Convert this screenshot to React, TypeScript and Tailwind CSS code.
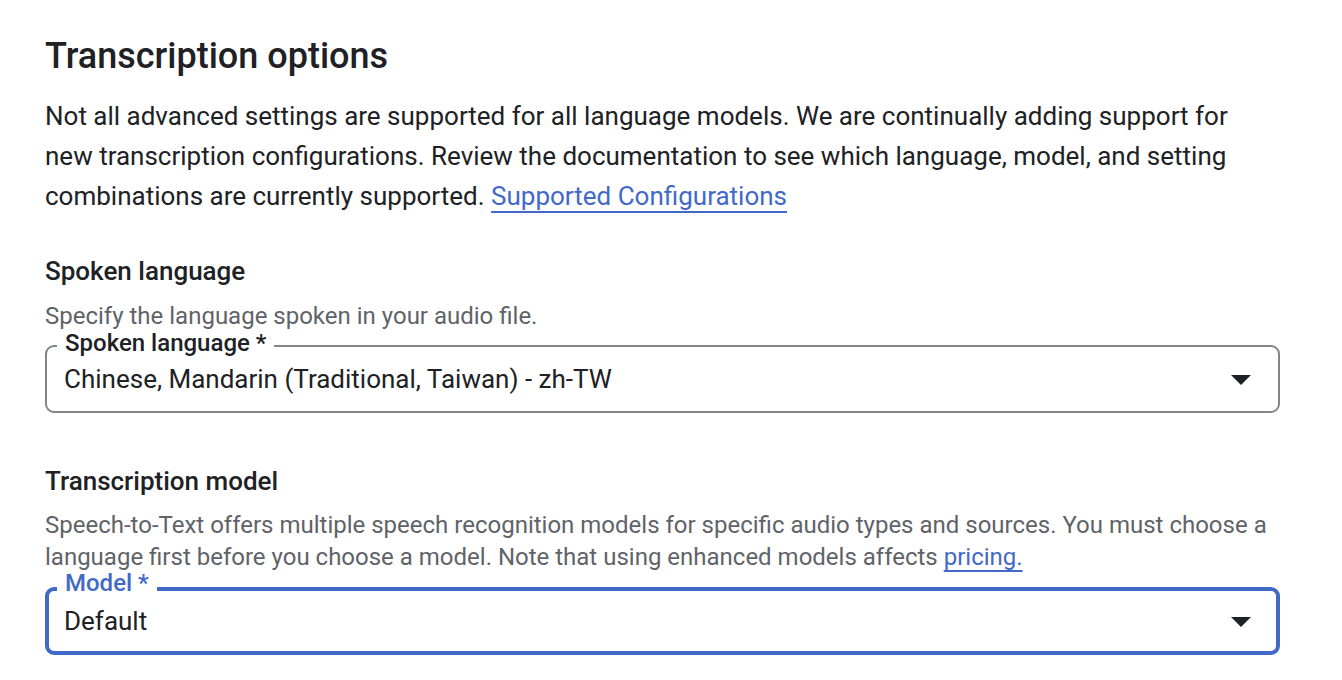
const FONT = { fontFamily: "Roboto, 'Noto Sans', Arial, sans-serif" };

function DropArrow() {
  return (
    <svg width="48" height="48" viewBox="0 0 24 24" className="shrink-0">
      <path d="M7 10l5 5 5-5z" fill="#202124" />
    </svg>
  );
}

function SelectField({ label, value, focused = false }: { label: string; value: string; focused?: boolean }) {
  return (
    <div
      className={
        focused
          ? "relative flex h-[68px] items-center justify-between rounded-[9px] border-[4px] border-[#4169c8] pl-[15px] pr-[11px]"
          : "relative flex h-[68px] items-center justify-between rounded-[9px] border-2 border-[#80868b] pl-[17px] pr-[13px]"
      }
    >
      <span
        className={
          focused
            ? "absolute left-[8px] top-[-20px] bg-white px-[8px] text-[24px] leading-[24px] font-medium text-[#4169c8]"
            : "absolute left-[10px] top-[-16px] bg-white px-[8px] text-[24px] leading-[24px] font-medium text-[#202124]"
        }
      >
        {label}
      </span>
      <span className="text-[26px] leading-[32px] text-[#202124]">{value}</span>
      <DropArrow />
    </div>
  );
}

export default function App() {
  return (
    <div className="min-h-screen bg-white" style={FONT}>
      <div className="ml-[45px] w-[1235px] pt-[36px]">
        <h1 className="text-[36px] leading-[40px] font-medium text-[#202124]">Transcription options</h1>
        <p className="mt-[20px] text-[26px] leading-[40px] text-[#202124]">
          Not all advanced settings are supported for all language models. We are continually adding support for new
          transcription configurations. Review the documentation to see which language, model, and setting combinations
          are currently supported.{" "}
          <a href="#" className="text-[#4169c8] underline decoration-[2px] underline-offset-[6px]">
            Supported Configurations
          </a>
        </p>

        <h2 className="mt-[39px] text-[26px] leading-[32px] font-medium text-[#202124]">Spoken language</h2>
        <p className="mt-[15px] text-[24px] leading-[28px] text-[#5f6368]">Specify the language spoken in your audio file.</p>
        <div className="mt-[15px]">
          <SelectField label="Spoken language *" value="Chinese, Mandarin (Traditional, Taiwan) - zh-TW" />
        </div>

        <h2 className="mt-[52px] text-[26px] leading-[32px] font-medium text-[#202124]">Transcription model</h2>
        <p className="mt-[12px] text-[24px] leading-[32px] text-[#5f6368]">
          Speech-to-Text offers multiple speech recognition models for specific audio types and sources. You must choose a
          language first before you choose a model. Note that using enhanced models affects{" "}
          <a href="#" className="text-[#4169c8] underline decoration-[2px] underline-offset-[5px]">
            pricing.
          </a>
        </p>
        <div className="mt-[14px]">
          <SelectField label="Model *" value="Default" focused />
        </div>
      </div>
    </div>
  );
}
